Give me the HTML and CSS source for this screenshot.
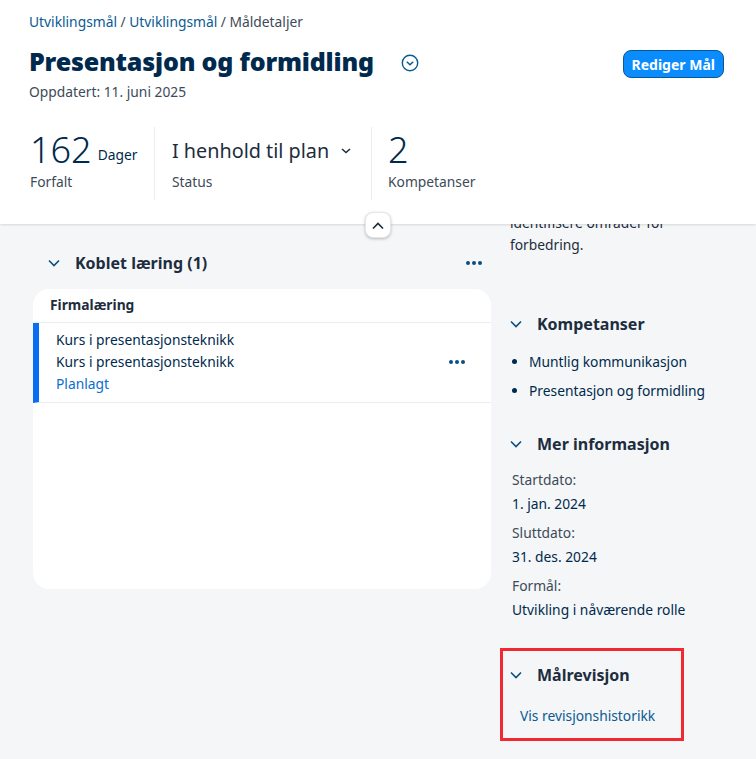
FILE: index.html
```html
<!DOCTYPE html>
<html lang="nb">
<head>
    <meta charset="UTF-8">
    <title>Måldetaljer</title>
    <link rel="stylesheet" href="styles.css">
</head>
<body>
    <header class="page-header">
        <nav class="breadcrumb">
            <a href="#">Utviklingsmål</a> / <a href="#">Utviklingsmål</a> / Måldetaljer
        </nav>
        <div class="title-row">
            <h1>Presentasjon og formidling</h1>
            <svg class="title-toggle" viewBox="0 0 18 18" width="18" height="18">
                <circle cx="9" cy="9" r="7.7" fill="none" stroke="#0a5a92" stroke-width="1.4"/>
                <path d="M5.8 7.8 9 10.8l3.2-3" fill="none" stroke="#0a5a92" stroke-width="1.5"/>
            </svg>
            <button class="edit-button">Rediger Mål</button>
        </div>
        <p class="updated">Oppdatert: 11. juni 2025</p>
        <div class="kpis">
            <div class="kpi kpi-first">
                <div class="kpi-value">162 <span class="kpi-unit">Dager</span></div>
                <div class="kpi-label">Forfalt</div>
            </div>
            <div class="kpi kpi-status">
                <div class="status-value">I henhold til plan
                    <svg viewBox="0 0 10 6" width="10" height="6"><path d="M1 1l4 3.6L9 1" fill="none" stroke="#1d2d3e" stroke-width="1.5"/></svg>
                </div>
                <div class="kpi-label">Status</div>
            </div>
            <div class="kpi kpi-last">
                <div class="kpi-value">2</div>
                <div class="kpi-label">Kompetanser</div>
            </div>
        </div>
        <button class="collapse-button">
            <svg viewBox="0 0 12 8" width="12" height="8"><path d="M1 6.5l5-5 5 5" fill="none" stroke="#1d2d3e" stroke-width="1.7"/></svg>
        </button>
    </header>

    <main class="content">
        <section class="learning">
            <div class="section-head">
                <svg class="chevron" viewBox="0 0 12 8" width="12" height="8"><path d="M1 1.5l5 5 5-5" fill="none" stroke="#0a4f80" stroke-width="1.6"/></svg>
                <h2>Koblet læring (1)</h2>
                <span class="dots"><i></i><i></i><i></i></span>
            </div>
            <div class="card">
                <div class="card-title">Firmalæring</div>
                <div class="card-row">
                    <div class="row-text">
                        <div>Kurs i presentasjonsteknikk</div>
                        <div>Kurs i presentasjonsteknikk</div>
                        <div class="row-status">Planlagt</div>
                    </div>
                    <span class="dots"><i></i><i></i><i></i></span>
                </div>
            </div>
        </section>

        <aside class="sidebar">
            <p class="clipped">identifisere områder for forbedring.</p>

            <section class="side-skills">
                <div class="section-head">
                    <svg class="chevron" viewBox="0 0 12 8" width="12" height="8"><path d="M1 1.5l5 5 5-5" fill="none" stroke="#0a4f80" stroke-width="1.6"/></svg>
                    <h2>Kompetanser</h2>
                </div>
                <ul class="skills">
                    <li>Muntlig kommunikasjon</li>
                    <li>Presentasjon og formidling</li>
                </ul>
            </section>

            <section class="side-info">
                <div class="section-head">
                    <svg class="chevron" viewBox="0 0 12 8" width="12" height="8"><path d="M1 1.5l5 5 5-5" fill="none" stroke="#0a4f80" stroke-width="1.6"/></svg>
                    <h2>Mer informasjon</h2>
                </div>
                <dl class="facts">
                    <dt>Startdato:</dt>
                    <dd>1. jan. 2024</dd>
                    <dt>Sluttdato:</dt>
                    <dd>31. des. 2024</dd>
                    <dt>Formål:</dt>
                    <dd>Utvikling i nåværende rolle</dd>
                </dl>
            </section>

            <section class="revision">
                <div class="section-head">
                    <svg class="chevron" viewBox="0 0 12 8" width="12" height="8"><path d="M1 1.5l5 5 5-5" fill="none" stroke="#0a4f80" stroke-width="1.6"/></svg>
                    <h2>Målrevisjon</h2>
                </div>
                <a class="history-link" href="#">Vis revisjonshistorikk</a>
            </section>
        </aside>
    </main>
</body>
</html>
```

FILE: styles.css
```css
html, body {
    margin: 0;
    height: 100%;
}
body {
    height: 759px;
    overflow: hidden;
    background-color: #f5f6f7;
    color: #1d2d3e;
    font-family: "Noto Sans", "Open Sans", sans-serif;
    font-size: 13.8px;
}
a {
    color: #0a5a92;
    text-decoration: none;
}
.page-header {
    position: relative;
    z-index: 2;
    height: 224px;
    box-sizing: border-box;
    padding: 12px 32px 0 29px;
    background-color: white;
    box-shadow: 0 1px 2px rgba(0, 0, 0, 0.12);
}
.breadcrumb {
    line-height: 19px;
    color: #3d4a57;
}
.title-row {
    display: flex;
    align-items: center;
    height: 30px;
    margin-top: 15px;
}
h1 {
    margin: 0;
    font-size: 25px;
    font-weight: 900;
    color: #002a4d;
    letter-spacing: -0.18px;
}
.title-toggle {
    margin: 4px 0 0 27px;
}
.edit-button {
    margin-left: auto;
    margin-top: 6px;
    height: 28px;
    padding: 0 8px;
    border: 1px solid #0a5a92;
    border-radius: 8px;
    background-color: #0a8cff;
    color: white;
    font-family: inherit;
    font-size: 14px;
    font-weight: 700;
}
.updated {
    margin: 6px 0 0;
    line-height: 19px;
    color: #3d4a57;
}
.kpis {
    display: flex;
    margin-top: 26px;
}
.kpi {
    height: 73px;
    padding: 0 17px;
    border-left: 1px solid #eaecee;
}
.kpi-first {
    width: 125px;
    box-sizing: border-box;
    padding: 0 0 0 1px;
    border-left: none;
}
.kpi-status {
    width: 182px;
}
.kpi-last {
    padding-left: 16px;
}
.kpi-value {
    display: flex;
    gap: 6px;
    height: 45px;
    font-size: 36px;
    font-weight: 300;
    line-height: 45px;
    color: #002a4d;
}
.kpi-unit {
    align-self: center;
    margin-top: 10px;
    font-size: 13.8px;
    font-weight: 400;
    line-height: 19px;
}
.status-value {
    display: flex;
    align-items: center;
    gap: 12px;
    height: 45px;
    box-sizing: border-box;
    padding-top: 2px;
    font-size: 19.8px;
    white-space: nowrap;
    color: #1d2d3e;
}
.kpi-label {
    line-height: 19px;
    color: #3d4a57;
}
.collapse-button {
    position: absolute;
    left: 365px;
    top: 212px;
    width: 26px;
    height: 26px;
    padding: 0;
    border: 1px solid #e4e6e8;
    border-radius: 8px;
    background-color: white;
    box-shadow: 0 1px 3px rgba(0, 0, 0, 0.25);
}
.content {
    display: grid;
    grid-template-columns: 458px 1fr;
    gap: 19px;
    padding: 0 0 0 33px;
}
.section-head {
    display: flex;
    align-items: center;
}
.chevron {
    flex: none;
    margin-right: 15px;
}
h2 {
    margin: 0;
    font-size: 16px;
    font-weight: 700;
    color: #1d2d3e;
}
.dots {
    display: flex;
    gap: 2px;
    margin-left: auto;
}
.dots i {
    width: 4px;
    height: 4px;
    border-radius: 50%;
    background-color: #0a4f80;
}
.learning .section-head {
    height: 30px;
    margin-top: 24px;
    padding: 0 9px 0 15px;
}
.card {
    height: 300px;
    margin-top: 11px;
    border-radius: 16px;
    background-color: white;
}
.card-title {
    height: 34px;
    box-sizing: border-box;
    padding-left: 17px;
    border-bottom: 1px solid #eaecee;
    font-weight: 700;
    line-height: 32px;
}
.card-row {
    display: flex;
    align-items: center;
    height: 77px;
    padding: 0 26px 2px 17px;
    border-left: 6px solid #0a6ef5;
    border-bottom: 1px solid #eaecee;
}
.row-text {
    line-height: 22px;
    color: #002a4d;
}
.row-status {
    color: #0a6ed1;
}
.sidebar {
    margin-top: -12px;
    padding-right: 30px;
}
.clipped {
    width: 170px;
    margin: 0;
    line-height: 22px;
    color: #1d2d3e;
}
.side-skills {
    margin-top: 57px;
}
.skills {
    margin: 12px 0 0;
    padding-left: 19px;
    line-height: 29px;
    color: #002a4d;
}
.side-info {
    margin-top: 28px;
}
.facts {
    margin: 13px 0 0 2px;
}
.facts dt {
    line-height: 24px;
    color: #3d4a57;
}
.facts dd {
    margin: 0 0 5px;
    line-height: 24px;
    color: #002a4d;
}
.revision {
    width: 184px;
    height: 93px;
    margin: 26px 0 0 -10px;
    padding: 13px 0 0 7px;
    box-sizing: border-box;
    border: 3px solid #f02a30;
}
.history-link {
    display: block;
    margin: 20px 0 0 10px;
    line-height: 19px;
}
```
